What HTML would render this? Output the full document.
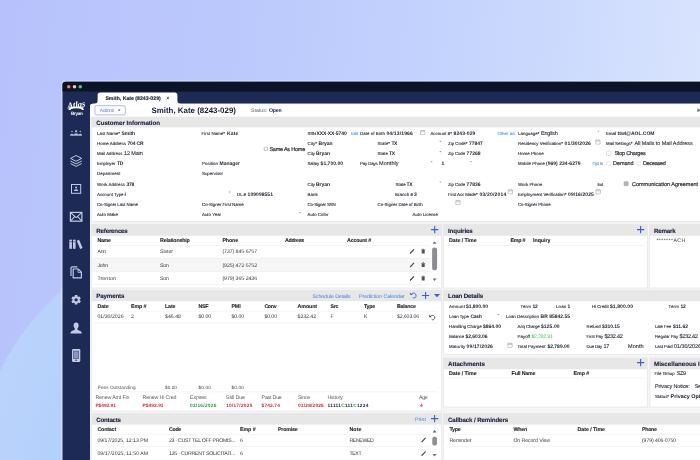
<!DOCTYPE html>
<html lang="en"><head><meta charset="utf-8"><title>Smith, Kate (8243-029)</title>
<style>
html,body{margin:0;padding:0}
body{width:700px;height:460px;overflow:hidden;position:relative;font-family:"Liberation Sans", sans-serif;
background:linear-gradient(97deg,#b7c2fc 0%,#bbc8fc 30%,#c1d0fd 52%,#ccdafd 75%,#dce7fe 100%)}
svg{position:absolute;left:0;top:0;width:700px;height:460px}
#txt{font-family:"Liberation Sans", sans-serif;text-rendering:geometricPrecision;filter:blur(.28px)}
#txt text{white-space:pre}
.lb,.lk{stroke:currentColor;stroke-width:.12px}
.ck{stroke:currentColor;stroke-width:.2px}
.vr,.ac{stroke:currentColor;stroke-width:.1px}
.tab{stroke:currentColor;stroke-width:.15px}
.sh,.th{stroke:currentColor;stroke-width:.1px}
.lb{font-size:4.4px;font-weight:400;color:#2e3138;fill:currentColor}
.vb{font-size:5.0px;font-weight:700;color:#23262e;fill:currentColor}
.vr{font-size:5.5px;font-weight:400;color:#2a2d35;fill:currentColor}
.ck{font-size:5.5px;font-weight:400;color:#2f3238;fill:currentColor}
.lk{font-size:4.4px;font-weight:400;color:#5a9ee8;fill:currentColor}
.lk2{font-size:5.2px;font-weight:400;color:#3f7fdc;fill:currentColor}
.sh{font-size:6.2px;font-weight:700;color:#171c36;fill:currentColor}
.th{font-size:5.3px;font-weight:700;color:#24272d;fill:currentColor}
.td{font-size:5.2px;font-weight:400;color:#33363b;fill:currentColor}
.ts{font-size:4.7px;font-weight:400;color:#4a4d55;fill:currentColor}
.sl{font-size:5.3px;font-weight:400;color:#5a5d63;fill:currentColor}
.sr{font-size:4.8px;font-weight:700;color:#d8243a;fill:currentColor}
.sg{font-size:4.8px;font-weight:700;color:#2e9e47;fill:currentColor}
.sn{font-size:4.8px;font-weight:700;color:#1b2447;fill:currentColor}
.ti{font-size:7.9px;font-weight:700;color:#171c36;fill:currentColor}
.tab{font-size:5.2px;font-weight:700;color:#1d2333;fill:currentColor}
.st{font-size:5.2px;font-weight:400;color:#5a5d63;fill:currentColor}
.stb{font-size:5.2px;font-weight:700;color:#1b2447;fill:currentColor}
.ac{font-size:4.8px;font-weight:400;color:#7f8fd6;fill:currentColor}
.lg{font-size:4.6px;font-weight:700;color:#ffffff;fill:currentColor}
.vg{font-size:5.0px;font-weight:400;color:#35c24e;fill:currentColor}
.vb2{font-size:5.4px;font-weight:700;color:#23262e;fill:currentColor}
</style></head><body>
<svg id="shapes" width="700" height="460" viewBox="0 0 700 460">
<defs><linearGradient id="lg1" x1="0" y1="0" x2="1" y2="1"><stop offset="0" stop-color="#bdd3fc"/><stop offset="1" stop-color="#b3d1fb"/></linearGradient></defs>
<path d="M0,371 Q22,325 63,289.5 V460 H0Z" fill="url(#lg1)"/>
<rect x="61.3" y="80.6" width="660" height="400" rx="4" fill="#ffffff" fill-opacity=".45"/>
<rect x="62.5" y="81.8" width="660" height="400" rx="3" fill="#1d2a55"/>
<path d="M62.5,91.5 V84.8 a3,3 0 0 1 3,-3 H700 V91.5Z" fill="#0b1326"/>
<circle cx="68.75" cy="86.75" r="1.75" fill="#ec8466"/>
<circle cx="74.5" cy="86.75" r="1.75" fill="#f8d09c"/>
<circle cx="80.25" cy="86.75" r="1.75" fill="#5cc27c"/>
<path d="M90,460 V106.5 a2.8,2.8 0 0 1 2.8,-2.8 H700 V460Z" fill="#f5f5f6"/>
<path d="M90,117 V106.5 a2.8,2.8 0 0 1 2.8,-2.8 H700 V117Z" fill="#ffffff"/>
<path d="M94.3,103.9 Q97.6,103.7 97.6,100.6 V95.2 Q97.6,92.6 100.2,92.6 H174.8 Q177.4,92.6 177.4,95.2 V100.6 Q177.4,103.7 180.7,103.9 Z" fill="#ffffff"/>
<path d="M166.7,97.1 l2.1,2.1 m0,-2.1 l-2.1,2.1" stroke="#2a2f3d" stroke-width=".9" fill="none"/>
<rect x="94.9" y="105.7" width="30.4" height="9.2" rx="1.4" fill="#fdfdff" stroke="#97a3e2" stroke-width=".75"/>
<path d="M117.9,109.6 h2.6 l-1.3,1.6z" fill="#4a5680"/>
<rect x="91.6" y="117" width="628.4" height="104.5" fill="#ffffff" stroke="#e2e2e3" stroke-width=".6"/>
<rect x="91.6" y="117" width="628.4" height="10.4" fill="#e7e7e7"/>
<rect x="91.6" y="224.6" width="349.9" height="63.400000000000006" fill="#ffffff" stroke="#e2e2e3" stroke-width=".6"/>
<rect x="91.6" y="224.6" width="349.9" height="11.2" fill="#e7e7e7"/>
<rect x="443.5" y="224.6" width="204.0" height="63.400000000000006" fill="#ffffff" stroke="#e2e2e3" stroke-width=".6"/>
<rect x="443.5" y="224.6" width="204.0" height="11.2" fill="#e7e7e7"/>
<rect x="649.6" y="224.6" width="70.39999999999998" height="63.400000000000006" fill="#ffffff" stroke="#e2e2e3" stroke-width=".6"/>
<rect x="649.6" y="224.6" width="70.39999999999998" height="11.2" fill="#e7e7e7"/>
<rect x="91.6" y="290.2" width="349.9" height="120.80000000000001" fill="#ffffff" stroke="#e2e2e3" stroke-width=".6"/>
<rect x="91.6" y="290.2" width="349.9" height="11" fill="#e7e7e7"/>
<rect x="443.5" y="290.2" width="276.5" height="64.30000000000001" fill="#ffffff" stroke="#e2e2e3" stroke-width=".6"/>
<rect x="443.5" y="290.2" width="276.5" height="10.9" fill="#e7e7e7"/>
<rect x="443.5" y="358" width="204.0" height="49" fill="#ffffff" stroke="#e2e2e3" stroke-width=".6"/>
<rect x="443.5" y="358" width="204.0" height="11.2" fill="#e7e7e7"/>
<rect x="650" y="358" width="70" height="49" fill="#ffffff" stroke="#e2e2e3" stroke-width=".6"/>
<rect x="650" y="358" width="70" height="11.2" fill="#e7e7e7"/>
<rect x="91.6" y="413.6" width="349.9" height="66.39999999999998" fill="#ffffff" stroke="#e2e2e3" stroke-width=".6"/>
<rect x="91.6" y="413.6" width="349.9" height="11" fill="#e7e7e7"/>
<rect x="443.5" y="413.6" width="276.5" height="66.39999999999998" fill="#ffffff" stroke="#e2e2e3" stroke-width=".6"/>
<rect x="443.5" y="413.6" width="276.5" height="11" fill="#e7e7e7"/>
<rect x="92" y="258.3" width="438.5" height="0" fill="none"/>
<rect x="92" y="258.2" width="338" height="13.4" fill="#f6f6f6"/>
<path d="M94,245.6 H430" stroke="#ececec" stroke-width="0.6"/>
<path d="M94,258.2 H430" stroke="#ececec" stroke-width="0.6"/>
<path d="M94,271.6 H430" stroke="#ececec" stroke-width="0.6"/>
<path d="M94,284.6 H430" stroke="#ececec" stroke-width="0.6"/>
<path d="M446,245.6 H645" stroke="#ececec" stroke-width="0.6"/>
<path d="M94,311.3 H438" stroke="#f0f0f0" stroke-width="0.6"/>
<path d="M94,323 H438" stroke="#ececec" stroke-width="0.6"/>
<path d="M94,391.8 H438" stroke="#ececec" stroke-width="0.6"/>
<path d="M94,434.4 H430" stroke="#ececec" stroke-width="0.6"/>
<path d="M94,446.6 H430" stroke="#ececec" stroke-width="0.6"/>
<path d="M446,434.4 H700" stroke="#f0f0f0" stroke-width="0.6"/>
<path d="M446,446.6 H700" stroke="#ececec" stroke-width="0.6"/>
<path d="M446,378 H645" stroke="#f0f0f0" stroke-width="0.6"/>
<path d="M431.09999999999997,229.6 H438.3 M434.7,226.0 V233.2" stroke="#3a5fd2" stroke-width="1.1" fill="none"/>
<path d="M637.0,229.6 H644.2 M640.6,226.0 V233.2" stroke="#3a5fd2" stroke-width="1.1" fill="none"/>
<path d="M422.0,295.5 H429.20000000000005 M425.6,291.9 V299.1" stroke="#3a5fd2" stroke-width="1.1" fill="none"/>
<path d="M637.0,362.6 H644.2 M640.6,359.0 V366.20000000000005" stroke="#3a5fd2" stroke-width="1.1" fill="none"/>
<path d="M431.0,418.6 H438.20000000000005 M434.6,415.0 V422.20000000000005" stroke="#3a5fd2" stroke-width="1.1" fill="none"/>
<path d="M411.43,294.35 A2.5,2.5 0 1 1 412.74,297.95" stroke="#3a5fd2" stroke-width="0.9" fill="none"/>
<path d="M410.13,292.45 v2.6 h2.6z" fill="#3a5fd2"/>
<path d="M430.51,316.45 A2.3,2.3 0 1 1 431.71,319.76" stroke="#4a4d55" stroke-width="0.8" fill="none"/>
<path d="M429.21,314.55 v2.6 h2.6z" fill="#4a4d55"/>
<path d="M434,294.1 h6 l-3,3.2z" fill="#3a5fd2"/>
<path d="M410.5,253.0 L413.7,249.6" stroke="#44474f" stroke-width="1.2" stroke-linecap="round"/>
<path d="M409.9,253.6 l.4,-1.2 l.8,.8z" fill="#44474f"/>
<path d="M421.7,250.1 h3 v2.9 a.5,.5 0 0 1 -.5,.5 h-2 a.5,.5 0 0 1 -.5,-.5z M421.2,249.29999999999998 h4 v.5 h-4z M422.5,248.7 h1.4 v.6 h-1.4z" fill="#50535b"/>
<path d="M410.5,266.6 L413.7,263.2" stroke="#44474f" stroke-width="1.2" stroke-linecap="round"/>
<path d="M409.9,267.2 l.4,-1.2 l.8,.8z" fill="#44474f"/>
<path d="M421.7,263.7 h3 v2.9 a.5,.5 0 0 1 -.5,.5 h-2 a.5,.5 0 0 1 -.5,-.5z M421.2,262.90000000000003 h4 v.5 h-4z M422.5,262.3 h1.4 v.6 h-1.4z" fill="#50535b"/>
<path d="M410.5,280.0 L413.7,276.59999999999997" stroke="#44474f" stroke-width="1.2" stroke-linecap="round"/>
<path d="M409.9,280.59999999999997 l.4,-1.2 l.8,.8z" fill="#44474f"/>
<path d="M421.7,277.09999999999997 h3 v2.9 a.5,.5 0 0 1 -.5,.5 h-2 a.5,.5 0 0 1 -.5,-.5z M421.2,276.3 h4 v.5 h-4z M422.5,275.7 h1.4 v.6 h-1.4z" fill="#50535b"/>
<path d="M422.1,441.6 L425.3,438.2" stroke="#44474f" stroke-width="1.2" stroke-linecap="round"/>
<path d="M421.5,442.2 l.4,-1.2 l.8,.8z" fill="#44474f"/>
<path d="M422.1,455.2 L425.3,451.79999999999995" stroke="#44474f" stroke-width="1.2" stroke-linecap="round"/>
<path d="M421.5,455.79999999999995 l.4,-1.2 l.8,.8z" fill="#44474f"/>
<path d="M432.6,243.79999999999998 h4.0 l-2.0,-2.6z" fill="#6f7278"/>
<path d="M432.6,278.40000000000003 h4.0 l-2.0,2.6z" fill="#6f7278"/>
<rect x="432.1" y="247.6" width="5" height="22.6" rx="2.2" fill="#8b8d92"/>
<path d="M432.6,432.4 h4.0 l-2.0,-2.6z" fill="#6f7278"/>
<path d="M432.6,454.0 h4.0 l-2.0,2.6z" fill="#6f7278"/>
<rect x="432.3" y="436.8" width="4.6" height="8.6" rx="2" fill="#8b8d92"/>
<path d="M597.3,130.7 h2.2 l-1.1,1.4z" fill="#9a9ca3"/>
<path d="M439.29999999999995,140.85 h2.2 l-1.1,1.4z" fill="#9a9ca3"/>
<path d="M439.29999999999995,151.0 h2.2 l-1.1,1.4z" fill="#9a9ca3"/>
<path d="M430.5,161.14999999999998 h2.2 l-1.1,1.4z" fill="#9a9ca3"/>
<path d="M469.9,161.14999999999998 h2.2 l-1.1,1.4z" fill="#9a9ca3"/>
<path d="M439.29999999999995,181.45 h2.2 l-1.1,1.4z" fill="#9a9ca3"/>
<path d="M228.5,191.6 h2.2 l-1.1,1.4z" fill="#9a9ca3"/>
<path d="M298.9,211.89999999999998 h2.2 l-1.1,1.4z" fill="#9a9ca3"/>
<path d="M497.29999999999995,314.0 h2.2 l-1.1,1.4z" fill="#9a9ca3"/>
<path d="M420.5,130.60000000000002 h4.4 v4 h-4.4z M420.5,131.70000000000002 h4.4 M421.6,129.8 v1.2 M423.8,129.8 v1.2" stroke="#a4a6ab" stroke-width=".55" fill="none"/>
<path d="M595.7,140.10000000000002 h4.4 v4 h-4.4z M595.7,141.20000000000002 h4.4 M596.8000000000001,139.3 v1.2 M599.0,139.3 v1.2" stroke="#a4a6ab" stroke-width=".55" fill="none"/>
<path d="M508.2,189.8 h4.4 v4 h-4.4z M508.2,190.9 h4.4 M509.3,189 v1.2 M511.5,189 v1.2" stroke="#a4a6ab" stroke-width=".55" fill="none"/>
<path d="M596,189.8 h4.4 v4 h-4.4z M596,190.9 h4.4 M597.1,189 v1.2 M599.3,189 v1.2" stroke="#a4a6ab" stroke-width=".55" fill="none"/>
<path d="M455.8,200.60000000000002 h4.4 v4 h-4.4z M455.8,201.70000000000002 h4.4 M456.90000000000003,199.8 v1.2 M459.1,199.8 v1.2" stroke="#a4a6ab" stroke-width=".55" fill="none"/>
<path d="M507.8,343.40000000000003 h4.4 v4 h-4.4z M507.8,344.5 h4.4 M508.90000000000003,342.6 v1.2 M511.1,342.6 v1.2" stroke="#a4a6ab" stroke-width=".55" fill="none"/>
<rect x="264.2" y="147.2" width="3.4" height="3.4" rx=".4" fill="#fff" stroke="#8a8c92" stroke-width=".5"/>
<rect x="606.6" y="151.0" width="4.4" height="4.4" rx=".8" fill="#fff" stroke="#b9bbc0" stroke-width=".5"/>
<circle cx="608.6" cy="163.45" r="1.9" fill="#fff" stroke="#d0d2d6" stroke-width=".5"/>
<circle cx="638.6" cy="163.45" r="1.9" fill="#fff" stroke="#d0d2d6" stroke-width=".5"/>
<rect x="624.1" y="181.65" width="4" height="4" rx=".6" fill="#b5b7bb" stroke="#8f9196" stroke-width=".5"/>
<path d="M68.2,109.9 l1.2,-1.5 l-1,-1.2 h2 Q76.2,105.6 82,107.2 h2 l-1,1.2 l1.2,1.5 h-2.6 v-.9 Q76.2,107.5 70.8,109 v.9z" fill="#ffffff"/>
<g fill="#c2cae5" fill-opacity=".9"><circle cx="72" cy="131.6" r=".75"/><rect x="75.1" y="130.2" width="2.1" height="2" rx=".5"/><circle cx="80.3" cy="131.6" r=".75"/><path d="M70.2,135.8 v-.9 a1.8,1.2 0 0 1 3.6,0 v-.2 a2.3,1.5 0 0 1 4.6,0 v.2 a1.8,1.2 0 0 1 3.6,0 v.9z"/></g>
<g fill="none" stroke="#c2cae5" stroke-width="1" stroke-linejoin="round"><path d="M76.1,155.5 L81.7,158.4 L76.1,161.3 L70.5,158.4Z"/><path d="M70.5,161 L76.1,163.9 L81.7,161"/><path d="M70.5,163.5 L76.1,166.4 L81.7,163.5"/></g>
<g><rect x="71.5" y="184.5" width="9.2" height="8.8" fill="none" stroke="#c2cae5" stroke-width="1"/><circle cx="76.1" cy="187.4" r="1" fill="#c2cae5"/><path d="M73.9,190.9 a2.2,1.6 0 0 1 4.4,0z" fill="#c2cae5"/></g>
<g fill="none" stroke="#c2cae5" stroke-width="1.2"><rect x="70.4" y="212.4" width="11.5" height="8.8"/><path d="M70.6,212.6 L76.15,217.6 L81.7,212.6 M70.6,221 L74.6,216.6 M81.7,221 L77.7,216.6" stroke-width="1.1"/></g>
<g fill="#c2cae5"><rect x="69.3" y="239.7" width="2.6" height="9.1"/><rect x="73" y="239.7" width="2.6" height="9.1"/><path d="M76.7,240.7 L79.1,239.8 L82.6,248 L80.2,248.9Z"/></g><path d="M69,241.7 h7" stroke="#1d2a55" stroke-width=".5"/>
<g fill="none" stroke="#c2cae5" stroke-width="1.2" stroke-linejoin="round"><path d="M73.2,269 h5 l3.2,3.2 v5.7 h-8.2z"/><path d="M71,276 v-7.8 a1.4,1.4 0 0 1 1.4,-1.4 h5"/><path d="M78,269.2 v3.2 h3.2" stroke-width=".8"/></g>
<g fill="#c2cae5"><rect x="74.75" y="295.05" width="2.7" height="9.5" rx=".5" transform="rotate(0 76.1 299.8)"/><rect x="74.75" y="295.05" width="2.7" height="9.5" rx=".5" transform="rotate(60 76.1 299.8)"/><rect x="74.75" y="295.05" width="2.7" height="9.5" rx=".5" transform="rotate(120 76.1 299.8)"/><circle cx="76.1" cy="299.8" r="3.5"/></g><circle cx="76.1" cy="299.8" r="1.65" fill="#1d2a55"/>
<g fill="#c2cae5"><ellipse cx="76.1" cy="325.6" rx="2.5" ry="3"/><path d="M70.5,333.6 C70.5,331 72.6,330.6 74.6,330 L74.8,328 h2.6 L77.6,330 C79.6,330.6 81.8,331 81.8,333.6Z"/></g>
<g><rect x="72" y="349" width="8.3" height="13" rx="1.2" fill="#c2cae5"/><rect x="73.6" y="351.1" width="5.1" height="7.4" fill="#8b96bf" stroke="#3d4978" stroke-width=".6"/><circle cx="76.15" cy="360.3" r=".7" fill="#1d2a55"/></g>
</svg>
<svg id="txt" viewBox="0 0 700 460">
<text x="67.2" y="107.4" transform="rotate(-7 76 104)" style="font-family:'Liberation Serif',serif;font-style:italic;font-weight:700;font-size:8.6px;fill:#fff">Atlas</text>
<text class="tab" x="105.4" y="100">Smith, Kate (8243-029)</text>
<text class="ti" x="151.4" y="113" letter-spacing="0.018">Smith, Kate (8243-029)</text>
<text class="st" x="251.0" y="112" letter-spacing="0.035">Status:</text>
<text class="stb" x="269.0" y="112" letter-spacing="-0.166">Open</text>
<text class="ac" x="99.8" y="112" letter-spacing="-0.219">Actions</text>
<text class="stb" x="697.2" y="112">History</text>
<text class="sh" x="96.3" y="125" letter-spacing="-0.047">Customer Information</text>
<text class="lb" x="97.0" y="135">Last Name*</text>
<text class="vb" x="121.6" y="135" letter-spacing="-0.098">Smith</text>
<text class="lb" x="201.6" y="135" letter-spacing="0.019">First Name*</text>
<text class="vb" x="227.0" y="135" letter-spacing="0.189">Kate</text>
<text class="lb" x="307.6" y="135" letter-spacing="-0.350">SSN</text>
<text class="vb" x="316.6" y="135" letter-spacing="-0.104">XXX-XX-5740</text>
<text class="lk" x="351.0" y="135" letter-spacing="-0.145">Edit</text>
<text class="lb" x="360.0" y="135" letter-spacing="0.046">Date of Birth</text>
<text class="vb" x="386.4" y="135" letter-spacing="0.157">04/13/1966</text>
<text class="lb" x="430.4" y="135" letter-spacing="0.035">Account #*</text>
<text class="vb" x="453.6" y="135" letter-spacing="0.082">8243-029</text>
<text class="lk" x="497.4" y="135" letter-spacing="0.015">Other a/c</text>
<text class="lb" x="518.0" y="135" letter-spacing="0.017">Language*</text>
<text class="vr" x="541.0" y="135" letter-spacing="-0.207">English</text>
<text class="lb" x="606.0" y="135" letter-spacing="-0.197">Email</text>
<text class="vb" x="617.6" y="135" letter-spacing="-0.024">ttwl@AOL.COM</text>
<text class="lb" x="97.0" y="145" letter-spacing="0.017">Home Address</text>
<text class="vb" x="127.4" y="145" letter-spacing="-0.126">704 CR</text>
<text class="lb" x="307.6" y="145" letter-spacing="0.024">City*</text>
<text class="vb" x="318.6" y="145" letter-spacing="-0.078">Bryan</text>
<text class="lb" x="377.6" y="145" letter-spacing="0.072">State*</text>
<text class="vb" x="391.4" y="145" letter-spacing="-0.350">TX</text>
<text class="lb" x="448.0" y="145">Zip Code*</text>
<text class="vb" x="469.0" y="145" letter-spacing="-0.061">77847</text>
<text class="lb" x="518.0" y="145">Residency Verification*</text>
<text class="vb" x="564.6" y="145" letter-spacing="0.137">01/30/2026</text>
<text class="lb" x="606.0" y="145" letter-spacing="-0.032">Mail Settings*</text>
<text class="vr" x="634.4" y="145" letter-spacing="-0.056">All Mails to Mail Address</text>
<text class="ck" x="269.4" y="151" letter-spacing="-0.218">Same As Home</text>
<text class="lb" x="97.0" y="155" letter-spacing="0.022">Mail Address</text>
<text class="vr" x="124.0" y="155" letter-spacing="-0.140">12 Main</text>
<text class="lb" x="307.6" y="155" letter-spacing="-0.041">City</text>
<text class="vb" x="316.0" y="155" letter-spacing="-0.037">Bryan</text>
<text class="lb" x="377.6" y="155" letter-spacing="0.027">State</text>
<text class="vb" x="389.0" y="155" letter-spacing="-0.350">TX</text>
<text class="lb" x="448.0" y="155" letter-spacing="-0.104">Zip Code</text>
<text class="vb" x="466.6" y="155" letter-spacing="0.019">77268</text>
<text class="lb" x="518.0" y="155">Home Phone</text>
<text class="ck" x="614.4" y="155" letter-spacing="-0.203">Stop Charges</text>
<text class="lb" x="97.0" y="165" letter-spacing="-0.018">Employer</text>
<text class="vb" x="117.0" y="165" letter-spacing="-0.336">TD</text>
<text class="lb" x="202.0" y="165" letter-spacing="0.047">Position</text>
<text class="vb" x="219.6" y="165" letter-spacing="-0.023">Manager</text>
<text class="lb" x="307.6" y="165" letter-spacing="-0.176">Salary</text>
<text class="vb" x="320.6" y="165" letter-spacing="0.017">$1,700.00</text>
<text class="lb" x="360.0" y="165" letter-spacing="-0.150">Pay Days</text>
<text class="vr" x="379.0" y="165" letter-spacing="0.048">Monthly</text>
<text class="vb" x="441.4" y="165">1</text>
<text class="lb" x="518.0" y="165" letter-spacing="0.012">Mobile Phone</text>
<text class="vb" x="546.0" y="165" letter-spacing="0.028">(969) 234-6279</text>
<text class="lk" x="592.4" y="165" letter-spacing="-0.228">Opt In</text>
<text class="ck" x="613.0" y="165" letter-spacing="-0.066">Demand</text>
<text class="ck" x="643.0" y="165" letter-spacing="-0.273">Deceased</text>
<text class="lb" x="97.0" y="175" letter-spacing="0.065">Department</text>
<text class="lb" x="202.0" y="175">Supervisor</text>
<text class="lb" x="97.0" y="186" letter-spacing="0.062">Work Address</text>
<text class="vb" x="126.4" y="186" letter-spacing="-0.248">378</text>
<text class="lb" x="307.6" y="186" letter-spacing="-0.041">City</text>
<text class="vb" x="316.0" y="186" letter-spacing="-0.037">Bryan</text>
<text class="lb" x="395.6" y="186" letter-spacing="-0.053">State</text>
<text class="vb" x="406.6" y="186" letter-spacing="-0.295">TX</text>
<text class="lb" x="448.0" y="186" letter-spacing="-0.104">Zip Code</text>
<text class="vb" x="466.6" y="186" letter-spacing="0.019">77836</text>
<text class="lb" x="518.0" y="186">Work Phone</text>
<text class="lb" x="597.4" y="186" letter-spacing="-0.248">Ext</text>
<text class="ck" x="632.0" y="186" letter-spacing="-0.015">Communication Agreement</text>
<text class="lb" x="97.0" y="196">Account Type</text>
<text class="vb" x="124.6" y="196">I</text>
<text class="lb" x="237.0" y="196" letter-spacing="-0.031">DL #</text>
<text class="vb" x="247.6" y="196" letter-spacing="0.041">109098551</text>
<text class="lb" x="307.6" y="196">Bank</text>
<text class="lb" x="395.0" y="196" letter-spacing="0.053">Branch #</text>
<text class="vb" x="414.0" y="196">3</text>
<text class="lb" x="448.0" y="196" letter-spacing="-0.077">First Acc Made*</text>
<text class="vb" x="479.4" y="196" letter-spacing="0.197">03/20/2014</text>
<text class="lb" x="518.0" y="196" letter-spacing="-0.017">Employment Verification*</text>
<text class="vb" x="568.0" y="196" letter-spacing="0.097">09/16/2025</text>
<text class="lb" x="97.0" y="206" letter-spacing="-0.064">Co-Signer Last Name</text>
<text class="lb" x="202.0" y="206" letter-spacing="-0.043">Co-Signer First Name</text>
<text class="lb" x="307.6" y="206" letter-spacing="-0.170">Co-Signer SSN</text>
<text class="lb" x="377.6" y="206" letter-spacing="-0.017">Co-Signer Date of Birth</text>
<text class="lb" x="518.0" y="206" letter-spacing="-0.072">Co-Signer Phone</text>
<text class="lb" x="97.0" y="216">Auto Make</text>
<text class="lb" x="202.0" y="216">Auto Year</text>
<text class="lb" x="307.6" y="216">Auto Color</text>
<text class="lb" x="412.6" y="216">Auto License</text>
<text class="sh" x="96.3" y="233" letter-spacing="-0.208">References</text>
<text class="th" x="97.4" y="242" letter-spacing="-0.309">Name</text>
<text class="th" x="160.0" y="242" letter-spacing="-0.183">Relationship</text>
<text class="th" x="222.4" y="242" letter-spacing="-0.118">Phone</text>
<text class="th" x="285.0" y="242" letter-spacing="-0.315">Address</text>
<text class="th" x="347.0" y="242" letter-spacing="-0.179">Account #</text>
<text class="td" x="97.4" y="253" letter-spacing="-0.211">Ann</text>
<text class="td" x="160.0" y="253" letter-spacing="-0.044">Sister</text>
<text class="td" x="222.4" y="253" letter-spacing="-0.063">(737) 845-6757</text>
<text class="td" x="97.4" y="267" letter-spacing="-0.163">John</text>
<text class="td" x="160.0" y="267" letter-spacing="-0.211">Son</text>
<text class="td" x="222.4" y="267" letter-spacing="-0.063">(925) 472-5752</text>
<text class="td" x="97.4" y="280" letter-spacing="0.130">Trenton</text>
<text class="td" x="160.0" y="280" letter-spacing="-0.211">Son</text>
<text class="td" x="222.4" y="280" letter-spacing="-0.063">(979) 365-2436</text>
<text class="sh" x="448.0" y="233" letter-spacing="-0.133">Inquiries</text>
<text class="th" x="449.0" y="242" letter-spacing="-0.052">Date / Time</text>
<text class="th" x="510.4" y="242" letter-spacing="-0.181">Emp #</text>
<text class="th" x="533.0" y="242" letter-spacing="-0.039">Inquiry</text>
<text class="sh" x="654.0" y="233" letter-spacing="-0.184">Remark</text>
<text class="td" x="656.4" y="242" letter-spacing="0.411">*******ACH</text>
<text class="sh" x="96.3" y="298" letter-spacing="-0.167">Payments</text>
<text class="lk2" x="312.6" y="298" letter-spacing="-0.059">Schedule Details</text>
<text class="lk2" x="359.0" y="298">Prediction Calendar</text>
<text class="th" x="97.4" y="308" letter-spacing="-0.071">Date</text>
<text class="th" x="131.0" y="308" letter-spacing="-0.101">Emp #</text>
<text class="th" x="165.0" y="308" letter-spacing="-0.127">Late</text>
<text class="th" x="198.6" y="308" letter-spacing="-0.350">NSF</text>
<text class="th" x="231.4" y="308" letter-spacing="-0.074">PMI</text>
<text class="th" x="264.4" y="308" letter-spacing="-0.350">Conv</text>
<text class="th" x="297.6" y="308" letter-spacing="-0.103">Amount</text>
<text class="th" x="330.6" y="308" letter-spacing="-0.350">Src</text>
<text class="th" x="364.0" y="308" letter-spacing="-0.246">Type</text>
<text class="th" x="397.0" y="308" letter-spacing="-0.247">Balance</text>
<text class="td" x="97.4" y="318" letter-spacing="0.023">01/30/2026</text>
<text class="td" x="131.0" y="318">2</text>
<text class="td" x="165.0" y="318" letter-spacing="0.021">$46.48</text>
<text class="td" x="198.6" y="318" letter-spacing="-0.117">$0.00</text>
<text class="td" x="231.4" y="318" letter-spacing="-0.037">$0.00</text>
<text class="td" x="264.4" y="318" letter-spacing="-0.077">$0.00</text>
<text class="td" x="297.6" y="318" letter-spacing="-0.052">$232.42</text>
<text class="td" x="330.6" y="318">F</text>
<text class="td" x="364.0" y="318">K</text>
<text class="td" x="397.0" y="318" letter-spacing="-0.120">$2,603.06</text>
<text class="ts" x="98.0" y="389" letter-spacing="0.037">Fees Outstanding</text>
<text class="ts" x="165.0" y="389" letter-spacing="0.053">$0.00</text>
<text class="ts" x="198.6" y="389" letter-spacing="0.133">$0.00</text>
<text class="ts" x="231.4" y="389" letter-spacing="0.173">$0.00</text>
<text class="sl" x="95.4" y="399" letter-spacing="-0.148">Renew Amt Fin</text>
<text class="sr" x="95.4" y="407">P$492.91</text>
<text class="sl" x="142.6" y="399" letter-spacing="-0.163">Renew Hi Cred</text>
<text class="sr" x="142.6" y="407" letter-spacing="0.057">P$492.91</text>
<text class="sl" x="190.0" y="399" letter-spacing="-0.153">Expires</text>
<text class="sg" x="190.0" y="407" letter-spacing="0.258">02/16/2026</text>
<text class="sl" x="226.0" y="399" letter-spacing="-0.082">Still Due</text>
<text class="sr" x="226.0" y="407" letter-spacing="0.258">10/17/2025</text>
<text class="sl" x="261.6" y="399" letter-spacing="-0.225">Past Due</text>
<text class="sr" x="261.6" y="407" letter-spacing="0.151">$743.74</text>
<text class="sl" x="298.0" y="399" letter-spacing="-0.250">Since</text>
<text class="sr" x="298.0" y="407" letter-spacing="0.198">01/28/2026</text>
<text class="sl" x="327.6" y="399" letter-spacing="-0.244">History:</text>
<text class="sn" x="327.6" y="407" letter-spacing="0.259">11111<tspan fill="#2e9e47">C</tspan>111<tspan fill="#2e9e47">C</tspan>1234</text>
<text class="sl" x="419.0" y="399" letter-spacing="-0.346">Age</text>
<text class="sr" x="420.0" y="407">4</text>
<text class="sh" x="96.3" y="422" letter-spacing="-0.248">Contacts</text>
<text class="lk2" x="415.0" y="421" letter-spacing="0.066">Print</text>
<text class="th" x="97.4" y="431" letter-spacing="-0.160">Contact</text>
<text class="th" x="169.0" y="431" letter-spacing="-0.312">Code</text>
<text class="th" x="240.0" y="431" letter-spacing="-0.061">Emp #</text>
<text class="th" x="278.0" y="431" letter-spacing="-0.215">Promise</text>
<text class="th" x="349.4" y="431" letter-spacing="0.105">Note</text>
<text class="td" x="97.4" y="442" letter-spacing="-0.023">09/17/2025, 12:13 PM</text>
<text class="td" x="169.0" y="442" letter-spacing="-0.264">23 - CUST TEL OFF PROMIS...</text>
<text class="td" x="240.0" y="442">6</text>
<text class="td" x="349.4" y="442" letter-spacing="-0.350">RENEWED</text>
<text class="td" x="97.4" y="455" letter-spacing="0.010">09/17/2025, 11:50 AM</text>
<text class="td" x="169.0" y="455" letter-spacing="-0.214">135 - CURRENT SOLICITATI...</text>
<text class="td" x="240.0" y="455">6</text>
<text class="td" x="349.4" y="455" letter-spacing="-0.350">TEXT</text>
<text class="sh" x="448.0" y="298" letter-spacing="-0.150">Loan Details</text>
<text class="lb" x="449.0" y="308" letter-spacing="0.143">Amount</text>
<text class="vb" x="466.0" y="308" letter-spacing="-0.028">$1,800.00</text>
<text class="lb" x="520.6" y="308" letter-spacing="0.159">Term</text>
<text class="vb" x="532.4" y="308" letter-spacing="-0.181">12</text>
<text class="lb" x="556.0" y="308" letter-spacing="0.155">Loan</text>
<text class="vb" x="567.6" y="308">1</text>
<text class="lb" x="592.0" y="308" letter-spacing="-0.053">Hi Credit</text>
<text class="vb" x="610.0" y="308" letter-spacing="0.083">$1,800.00</text>
<text class="lb" x="668.6" y="308" letter-spacing="0.159">Term</text>
<text class="vb" x="680.4" y="308" letter-spacing="-0.081">12</text>
<text class="lb" x="449.0" y="318" letter-spacing="-0.049">Loan Type</text>
<text class="vb" x="470.4" y="318" letter-spacing="-0.309">Cash</text>
<text class="lb" x="506.0" y="318">Loan Description</text>
<text class="vb" x="540.6" y="318">BR 85842.55</text>
<text class="lb" x="449.0" y="328" letter-spacing="-0.024">Handling Charge</text>
<text class="vb" x="483.0" y="328" letter-spacing="-0.011">$864.00</text>
<text class="lb" x="517.6" y="328" letter-spacing="-0.119">Acq Charge</text>
<text class="vb" x="541.0" y="328" letter-spacing="0.075">$125.00</text>
<text class="lb" x="586.6" y="328" letter-spacing="-0.029">Refund</text>
<text class="vb" x="602.0" y="328" letter-spacing="-0.068">$310.15</text>
<text class="lb" x="655.0" y="328" letter-spacing="-0.168">Late Fee</text>
<text class="vb" x="673.0" y="328">$11.62</text>
<text class="lb" x="449.0" y="338" letter-spacing="-0.125">Balance</text>
<text class="vb" x="465.4" y="338">$2,603.06</text>
<text class="lb" x="517.6" y="338">Payoff</text>
<text class="vg" x="531.4" y="338" letter-spacing="-0.072">$2,292.91</text>
<text class="lb" x="586.6" y="338" letter-spacing="-0.103">First Pay</text>
<text class="vr" x="604.4" y="338" letter-spacing="-0.242">$232.42</text>
<text class="lb" x="655.0" y="338" letter-spacing="-0.107">Regular Pay</text>
<text class="vr" x="679.6" y="338" letter-spacing="-0.270">$232.42</text>
<text class="lb" x="449.0" y="348" letter-spacing="0.097">Maturity</text>
<text class="vb" x="466.6" y="348" letter-spacing="0.137">09/17/2026</text>
<text class="lb" x="517.6" y="348">Total Payment</text>
<text class="vb" x="547.4" y="348">$2,789.00</text>
<text class="lb" x="586.6" y="348" letter-spacing="-0.242">Due Day</text>
<text class="vr" x="603.6" y="348" letter-spacing="-0.350">17</text>
<text class="vr" x="628.0" y="348" letter-spacing="0.061">Month</text>
<text class="lb" x="655.0" y="348" letter-spacing="-0.079">Last Paid</text>
<text class="vr" x="674.0" y="348" letter-spacing="-0.053">01/30/2026</text>
<text class="sh" x="448.0" y="366" letter-spacing="-0.044">Attachments</text>
<text class="th" x="449.0" y="375" letter-spacing="-0.052">Date / Time</text>
<text class="th" x="511.6" y="375" letter-spacing="-0.170">Full Name</text>
<text class="th" x="573.6" y="375" letter-spacing="-0.101">Emp #</text>
<text class="sh" x="654.0" y="366">Miscellaneous Information</text>
<text class="lb" x="654.6" y="375" letter-spacing="-0.050">File Group</text>
<text class="vr" x="676.6" y="375" letter-spacing="-0.350">SZ9</text>
<text class="vr" x="655.0" y="388" letter-spacing="-0.139">Privacy Notice:</text>
<text class="vr" x="694.4" y="388">Sent</text>
<text class="lb" x="655.0" y="398" letter-spacing="-0.022">Status*</text>
<text class="vb2" x="670.6" y="398">Privacy Opt Out</text>
<text class="sh" x="448.0" y="422" letter-spacing="-0.130">Callback / Reminders</text>
<text class="th" x="449.4" y="431" letter-spacing="-0.196">Type</text>
<text class="th" x="513.4" y="431" letter-spacing="-0.205">When</text>
<text class="th" x="577.6" y="431" letter-spacing="-0.070">Date / Time</text>
<text class="th" x="642.0" y="431" letter-spacing="-0.317">Phone</text>
<text class="td" x="449.4" y="442" letter-spacing="-0.062">Reminder</text>
<text class="td" x="513.4" y="442" letter-spacing="-0.078">On Record View</text>
<text class="td" x="642.0" y="442" letter-spacing="-0.106">(979) 406-0750</text>
<text class="lg" x="71.1" y="115" letter-spacing="-0.350">Bryan</text>
</svg>
</body></html>
